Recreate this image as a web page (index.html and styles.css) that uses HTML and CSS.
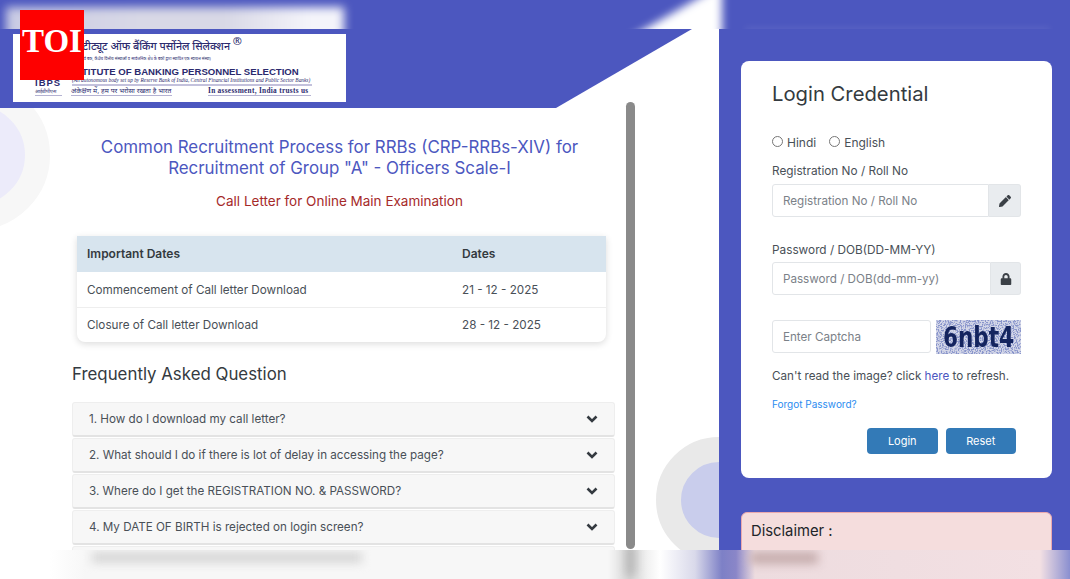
FILE: index.html
```html
<!DOCTYPE html>
<html lang="en">

<head>
    <meta charset="UTF-8">
    <meta name="viewport" content="width=device-width, initial-scale=1.0">
    <title>Call Letter Login</title>
    <link rel="stylesheet" href="styles.css">
</head>

<body>
    <div class="strip strip-top">
        <span class="glow glow-logo"></span>
        <span class="glow glow-corner"><span class="corner-shape"></span></span>
        <span class="glow glow-card"></span>
    </div>

    <div class="toi">TOI</div>

    <div class="main">
        <div class="left">
            <span class="circle circle-left"></span>
            <span class="circle circle-right"></span>
            <div class="banner">
                <div class="logo">
                    <div class="logo-hi">इंस्टीट्यूट ऑफ बैंकिंग पर्सोनेल सिलेक्शन <sup>®</sup></div>
                    <div class="logo-hi-sub">रिज़र्व बैंक, केंद्रीय वित्तीय संस्थाओं व सार्वजनिक क्षेत्र के बैंकों द्वारा स्थापित एक स्वायत्त संस्था)</div>
                    <div class="logo-en">INSTITUTE OF BANKING PERSONNEL SELECTION</div>
                    <div class="logo-en-sub">(An autonomous body set up by Reserve Bank of India, Central Financial Institutions and Public Sector Banks)</div>
                    <div class="logo-foot">
                        <span class="logo-mark">IBPS<small>आईबीपीएस</small></span>
                        <span class="logo-trust">अंकेक्षण में, हम पर भरोसा रखता है भारत</span>
                        <span class="logo-motto">In assessment, India trusts us</span>
                    </div>
                </div>
            </div>

            <div class="content">
                <h1>Common Recruitment Process for RRBs (CRP-RRBs-XIV) for Recruitment of Group "A" - Officers Scale-I</h1>
                <h2>Call Letter for Online Main Examination</h2>

                <table class="dates">
                    <thead>
                        <tr>
                            <th>Important Dates</th>
                            <th>Dates</th>
                        </tr>
                    </thead>
                    <tbody>
                        <tr>
                            <td>Commencement of Call letter Download</td>
                            <td>21 - 12 - 2025</td>
                        </tr>
                        <tr>
                            <td>Closure of Call letter Download</td>
                            <td>28 - 12 - 2025</td>
                        </tr>
                    </tbody>
                </table>

                <h3>Frequently Asked Question</h3>

                <div class="faq">
                    <div class="faq-item">1. How do I download my call letter?<svg class="chev" viewBox="0 0 12 8"><path d="M1.500 1.500 6 6l4.500-4.500"/></svg></div>
                    <div class="faq-item">2. What should I do if there is lot of delay in accessing the page?<svg class="chev" viewBox="0 0 12 8"><path d="M1.500 1.500 6 6l4.500-4.500"/></svg></div>
                    <div class="faq-item">3. Where do I get the REGISTRATION NO. &amp; PASSWORD?<svg class="chev" viewBox="0 0 12 8"><path d="M1.500 1.500 6 6l4.500-4.500"/></svg></div>
                    <div class="faq-item">4. My DATE OF BIRTH is rejected on login screen?<svg class="chev" viewBox="0 0 12 8"><path d="M1.500 1.500 6 6l4.500-4.500"/></svg></div>
                    <div class="faq-item"></div>
                </div>
            </div>
            <div class="scrollbar"></div>
        </div>

        <div class="right">
            <div class="card">
                <h4>Login Credential</h4>
                <div class="radios">
                    <label><span class="radio"></span>Hindi</label>
                    <label><span class="radio"></span>English</label>
                </div>

                <div class="field-label">Registration No / Roll No</div>
                <div class="input-group">
                    <div class="input">Registration No / Roll No</div>
                    <div class="addon addon-wide">
                        <svg viewBox="0 0 512 512"><path d="M497.900 142.100l-46.100 46.100c-4.700 4.700-12.300 4.700-17 0l-111-111c-4.700-4.700-4.700-12.300 0-17l46.100-46.100c18.700-18.700 49.100-18.700 67.900 0l60.100 60.100c18.800 18.700 18.800 49.100 0 67.900zM284.200 99.800L21.600 362.400.4 483.900c-2.900 16.400 11.400 30.600 27.800 27.800l121.500-21.300 262.600-262.600c4.700-4.700 4.700-12.300 0-17l-111-111c-4.800-4.700-12.400-4.700-17.100 0z"/></svg>
                    </div>
                </div>

                <div class="field-label field-label-gap">Password / DOB(DD-MM-YY)</div>
                <div class="input-group">
                    <div class="input">Password / DOB(dd-mm-yy)</div>
                    <div class="addon">
                        <svg viewBox="0 0 448 512"><path d="M400 224h-24v-72C376 68.200 307.800 0 224 0S72 68.200 72 152v72H48c-26.500 0-48 21.500-48 48v192c0 26.500 21.500 48 48 48h352c26.500 0 48-21.500 48-48V272c0-26.500-21.500-48-48-48zm-104 0H152v-72c0-39.700 32.300-72 72-72s72 32.300 72 72v72z"/></svg>
                    </div>
                </div>

                <div class="captcha-row">
                    <div class="input input-captcha">Enter Captcha</div>
                    <div class="captcha">
                        <svg class="captcha-noise">
                            <filter id="noise">
                                <feTurbulence type="fractalNoise" baseFrequency="0.75" numOctaves="2" seed="4"/>
                                <feColorMatrix values="0 0 0 0 0.25  0 0 0 0 0.3  0 0 0 0 0.6  6 0 0 0 -2.700"/>
                            </filter>
                            <rect width="100%" height="100%" filter="url(#noise)"/>
                        </svg>
                        <span class="captcha-text">6nbt4</span>
                    </div>
                </div>

                <p class="refresh">Can't read the image? click <a href="#">here</a> to refresh.</p>
                <a class="forgot" href="#">Forgot Password?</a>

                <div class="actions">
                    <button>Login</button>
                    <button>Reset</button>
                </div>
            </div>

            <div class="disclaimer">Disclaimer :</div>
        </div>
    </div>

    <div class="strip strip-bottom">
        <span class="smear smear-faq"></span>
        <span class="smear smear-scroll"></span>
        <span class="smear smear-disc"></span>
    </div>
</body>

</html>
```

FILE: styles.css
```css
* {
    padding: 0;
    margin: 0;
    box-sizing: border-box;
}

html,
body {
    height: 579px;
    overflow: hidden;
}

body {
    font-family: Inter, "Noto Sans", sans-serif;
    font-size: 12px;
    color: #495057;
    background-color: #4c57bf;
    display: flex;
    flex-direction: column;
}

/* blurred bands at top and bottom of the photo */
.strip {
    height: 29px;
    flex: none;
    position: relative;
    overflow: hidden;
    background-color: #4c57bf;
}

.glow {
    position: absolute;
    filter: blur(5px);
}

.glow-logo {
    left: 6px;
    top: 7px;
    width: 338px;
    height: 40px;
    background: linear-gradient(90deg, #c9cbe4, #d8d8e6 40%, #d8d8e6 65%, #f4f4fa 90%);
}

.glow-corner {
    left: 620px;
    top: -10px;
    width: 102px;
    height: 50px;
    filter: blur(4px);
}

.corner-shape {
    display: block;
    width: 100%;
    height: 100%;
    background-color: #fff;
    clip-path: polygon(92px 0, 102px 0, 102px 50px, 6px 50px);
}

.glow-card {
    left: 745px;
    top: 27px;
    width: 305px;
    height: 8px;
    background-color: rgba(255, 255, 255, 0.07);
    filter: blur(3px);
}

.toi {
    position: absolute;
    left: 20px;
    top: 10px;
    width: 64px;
    height: 70px;
    background-color: #fe0000;
    color: #fff;
    font-family: "Liberation Serif", serif;
    font-size: 33px;
    font-weight: bold;
    line-height: 63px;
    text-align: center;
    z-index: 3;
}

.main {
    flex: 1;
    display: flex;
    min-height: 0;
}

.left {
    width: 719px;
    flex: none;
    background-color: #fff;
    position: relative;
    overflow: hidden;
}

.circle {
    position: absolute;
    border-radius: 50%;
}

.circle-left {
    left: -100px;
    top: 51px;
    width: 150px;
    height: 150px;
    border: 25px solid #f7f7f7;
    background-color: #ecebfa;
}

.circle-right {
    left: 656px;
    top: 408px;
    width: 126px;
    height: 126px;
    border: 25px solid #e9e9e9;
    background-color: #c9cdec;
}

.banner {
    height: 79px;
    background-color: #4c57bf;
    clip-path: polygon(0 0, 692px 0, 556px 100%, 0 100%);
    padding: 5px 0 0 13px;
    position: relative;
}

.logo {
    width: 333px;
    height: 68px;
    background-color: #fff;
    color: #2b2a6e;
    padding: 5px 0 0 58px;
    overflow: hidden;
}

.logo-hi {
    font-family: "Noto Sans", "DejaVu Sans", sans-serif;
    font-size: 10.700px;
    font-weight: 500;
    line-height: 15px;
    white-space: nowrap;
    margin-left: 2px;
}

.logo-hi sup {
    font-size: 11px;
    line-height: 0;
}

.logo-hi-sub {
    font-size: 4px;
    line-height: 8px;
    white-space: nowrap;
    margin: 1px 0 0 7px;
}

.logo-en {
    font-family: "Liberation Sans", sans-serif;
    font-size: 9.600px;
    font-weight: bold;
    line-height: 11px;
    white-space: nowrap;
    margin: 3px 0 0 -5px;
}

.logo-en-sub {
    font-family: "Liberation Serif", serif;
    font-size: 5.350px;
    font-style: italic;
    line-height: 7px;
    height: 9px;
    width: 240px;
    white-space: nowrap;
    margin-left: 1px;
    border-bottom: 2px solid #c3c1dc;
}

.logo-foot {
    display: flex;
    align-items: flex-end;
    height: 10px;
    margin-left: -36px;
}

.logo-mark {
    flex: none;
    font-family: "Liberation Sans", sans-serif;
    font-size: 9.500px;
    font-weight: bold;
    letter-spacing: 1px;
    width: 27px;
    margin-right: 9px;
    line-height: 10px;
}

.logo-mark small {
    display: block;
    font-size: 5px;
    font-weight: normal;
    letter-spacing: 0;
    line-height: 7px;
    white-space: nowrap;
    border-bottom: 1px solid #b5b3d3;
}

.logo-trust {
    flex: none;
    width: 101px;
    font-size: 6.800px;
    line-height: 9px;
    white-space: nowrap;
    border-bottom: 1px solid #b5b3d3;
}

.logo-motto {
    flex: none;
    width: 103px;
    font-family: "Liberation Serif", serif;
    font-size: 7.300px;
    font-weight: bold;
    letter-spacing: 0.3px;
    line-height: 9px;
    white-space: nowrap;
    margin-left: 36px;
    border-bottom: 1px solid #b5b3d3;
}

.content {
    position: relative;
    padding: 0 112px 0 72px;
}

h1 {
    font-size: 16.900px;
    font-weight: 400;
    line-height: 21px;
    color: #4c57bf;
    text-align: center;
    margin-top: 29px;
}

h2 {
    font-size: 13.500px;
    font-weight: 400;
    line-height: 17px;
    color: #a52a2a;
    text-align: center;
    margin-top: 14px;
}

.dates {
    width: 529px;
    margin: 26px 0 0 5px;
    border-collapse: separate;
    border-spacing: 0;
    border-radius: 0 0 8px 8px;
    box-shadow: 0 2px 7px rgba(0, 0, 0, 0.14);
    background-color: #fff;
}

.dates th {
    height: 36px;
    padding: 0 10px 1px;
    font-size: 12px;
    font-weight: 600;
    text-align: left;
    color: #343a40;
    background-color: #d7e4ee;
}

.dates td {
    height: 35px;
    padding: 0 10px;
    font-size: 11.700px;
}

.dates tr + tr td {
    border-top: 1px solid #eeeeee;
    padding-bottom: 1px;
}

.dates th:first-child,
.dates td:first-child {
    width: 375px;
}

h3 {
    font-size: 16.850px;
    font-weight: 400;
    line-height: 21px;
    color: #343a40;
    margin-top: 22px;
}

.faq {
    width: 543px;
    margin-top: 17px;
    display: flex;
    flex-direction: column;
    gap: 1.100px;
}

.faq-item {
    height: 35px;
    flex: none;
    padding: 0 16px;
    display: flex;
    align-items: center;
    justify-content: space-between;
    font-size: 11.650px;
    background-color: #f7f7f7;
    border: 1px solid #eeeeee;
    border-bottom: 2px solid #e3e3e3;
    border-radius: 3px;
}

.chev {
    width: 12px;
    height: 8px;
    fill: none;
    stroke: #343a40;
    stroke-width: 2.600;
    margin-right: 0;
}

.scrollbar {
    position: absolute;
    left: 626px;
    top: 73px;
    width: 9px;
    height: 447px;
    border-radius: 5px;
    background-color: #8a8a8a;
}

.right {
    flex: 1;
    padding: 32px 18px 0 22px;
}

.card {
    height: 417px;
    background-color: #fff;
    border-radius: 8px;
    padding: 20px 31px 0;
}

h4 {
    font-size: 20.250px;
    font-weight: 400;
    line-height: 25px;
    color: #343a40;
}

.radios {
    display: flex;
    gap: 13px;
    margin-top: 28px;
    font-size: 12px;
    line-height: 17px;
}

.radios label {
    display: flex;
    align-items: center;
    gap: 4px;
}

.radio {
    width: 11px;
    height: 11px;
    border: 1px solid #767676;
    border-radius: 50%;
    margin-top: -3px;
}

.field-label {
    font-size: 11.800px;
    line-height: 16px;
    margin-top: 12px;
}

.field-label + .input-group {
    margin-top: 5px;
}

.field-label-gap {
    margin-top: 25px;
}

.field-label-gap + .input-group {
    margin-top: 4px;
}

.input-group {
    display: flex;
    width: 249px;
    height: 33px;
}

.input {
    flex: 1;
    padding: 0 10px;
    display: flex;
    align-items: center;
    font-size: 11.650px;
    color: #7b8188;
    background-color: #fff;
    border: 1px solid #e2e5e8;
    border-radius: 3px 0 0 3px;
}

.addon {
    width: 30px;
    display: flex;
    align-items: center;
    justify-content: center;
    background-color: #e9ecef;
    border: 1px solid #e2e5e8;
    border-left: 0;
    border-radius: 0 3px 3px 0;
}

.addon-wide {
    width: 32px;
}

.addon svg {
    width: 12px;
    height: 12px;
    fill: #3b4046;
}

.captcha-row {
    display: flex;
    gap: 5px;
    margin-top: 25px;
}

.input-captcha {
    flex: none;
    width: 159px;
    height: 33px;
    border-radius: 3px;
}

.captcha {
    width: 85px;
    height: 34px;
    position: relative;
    background-color: #d4d7e8;
    overflow: hidden;
    text-align: center;
}

.captcha-noise {
    position: absolute;
    left: 0;
    top: 0;
    width: 100%;
    height: 100%;
}

.captcha-text {
    display: inline-block;
    position: relative;
    font-family: "DejaVu Sans", sans-serif;
    font-size: 24px;
    font-weight: bold;
    font-stretch: condensed;
    line-height: 34px;
    color: #14245f;
    transform: scaleY(1.2);
}

.refresh {
    font-size: 11.650px;
    line-height: 16px;
    margin-top: 14px;
    white-space: nowrap;
}

.refresh a {
    color: #4c57bf;
    text-decoration: none;
}

.forgot {
    display: block;
    font-size: 10px;
    line-height: 14px;
    margin-top: 13px;
    color: #2b8cf0;
    text-decoration: none;
}

.actions {
    display: flex;
    justify-content: flex-end;
    gap: 8px;
    margin: 17px 5px 0 0;
}

button {
    width: 70.500px;
    height: 26px;
    font-family: Inter, sans-serif;
    font-size: 11px;
    color: #fff;
    background-color: #337ab7;
    border: none;
    border-radius: 4px;
}

.disclaimer {
    height: 80px;
    margin-top: 34px;
    padding: 8px 9px;
    font-size: 14.800px;
    line-height: 20px;
    color: #212529;
    background-color: #f5dddd;
    border: 1px solid #eba9ae;
    border-radius: 6px;
}

.strip-bottom {
    background: linear-gradient(90deg, #fff 50px, #f7f7f7 85px, #f7f7f7 608px, #d6d6d6 630px, #f2f2f2 648px, #fff 660px, #d9d9ea 695px, #7d80c6 722px, #8a86c8 736px, #eddcdf 755px, #f3e0e3 1040px, #8a8fd0 1070px);
}

.smear {
    position: absolute;
    filter: blur(5px);
}

.smear-faq {
    left: 92px;
    top: 2px;
    width: 270px;
    height: 11px;
    background-color: #d6d6d6;
}

.smear-scroll {
    left: 626px;
    top: -6px;
    width: 9px;
    height: 32px;
    background-color: #b4b4b4;
}

.smear-disc {
    left: 750px;
    top: 2px;
    width: 68px;
    height: 12px;
    background-color: #c6adad;
}
```
